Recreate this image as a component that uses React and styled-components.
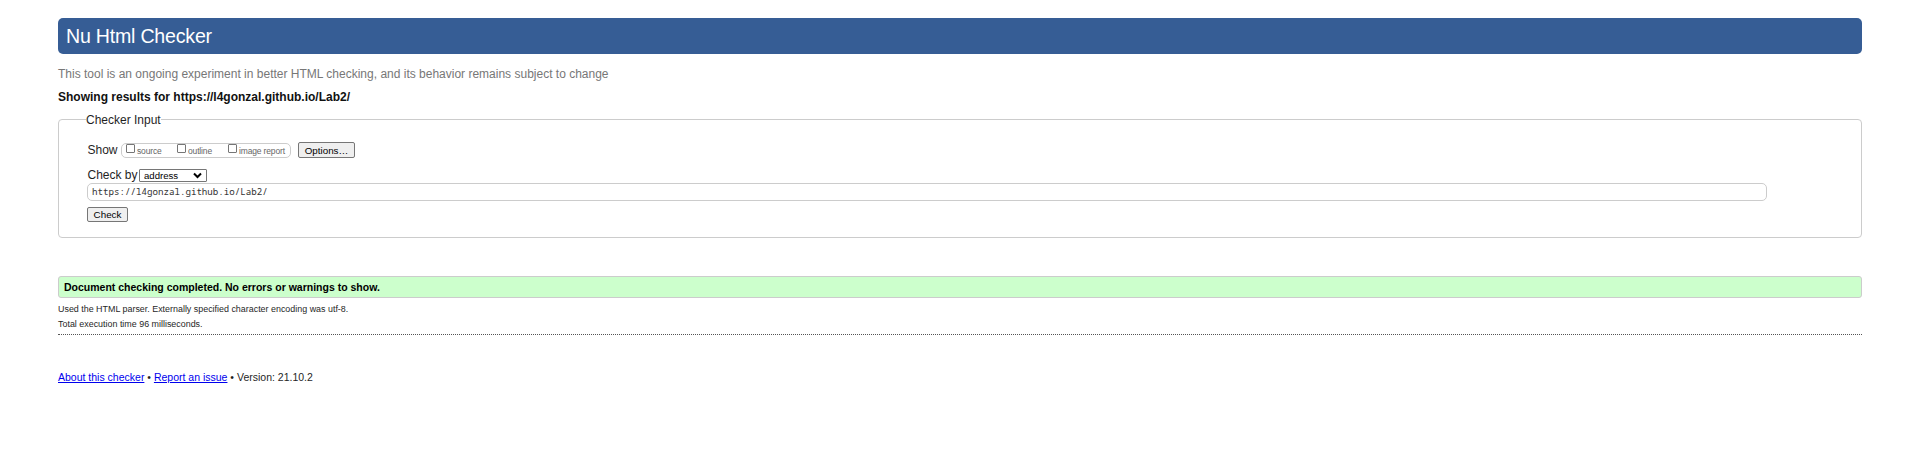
import React from "react";
import styled, { createGlobalStyle } from "styled-components";

const GlobalStyle = createGlobalStyle`
  * { box-sizing: border-box; }
  body {
    margin: 0;
    background: #fff;
    color: #1f1f1f;
    font-family: Arial, "Liberation Sans", sans-serif;
  }
`;

const Page = styled.div`
  padding: 18px 58px 0;
`;

const Banner = styled.header`
  height: 36px;
  padding-left: 8px;
  border-radius: 5px;
  background: #365d95;
`;

const Title = styled.h1`
  margin: 0;
  font-size: 19.6px;
  font-weight: 400;
  line-height: 36px;
  letter-spacing: -0.22px;
  color: #fff;
`;

const Notice = styled.p`
  margin: 9px 0 0;
  font-size: 12px;
  line-height: 22px;
  color: #777;
`;

const ResultsHeading = styled.h2`
  margin: 1px 0 0;
  font-size: 12px;
  line-height: 22px;
  color: #111;
`;

const InputPanel = styled.fieldset`
  height: 126px;
  margin: 4px 0 0;
  padding: 15px 27px 0 28px;
  border: 1px solid #ccc;
  border-radius: 4px;
`;

const Legend = styled.legend`
  height: 15px;
  margin-left: -1px;
  padding: 0;
  font-size: 12px;
  line-height: 16px;
`;

const ShowRow = styled.div`
  display: flex;
  align-items: flex-start;
  height: 27px;
`;

const FieldLabel = styled.span`
  width: ${(p) => p.$width}px;
  padding-left: 0.5px;
  font-size: 12px;
  line-height: ${(p) => p.$line}px;
  white-space: nowrap;
`;

const Choices = styled.div`
  display: flex;
  width: 170px;
  height: 15px;
  margin: 1px 7px 0 0;
  padding-left: 4px;
  border: 1px solid #ccc;
  border-radius: 5px;
`;

const Choice = styled.label`
  display: flex;
  align-items: flex-start;
  flex: none;
  gap: 2px;
  width: 51px;
  font-size: 8.5px;
  line-height: 14px;
  letter-spacing: -0.15px;
  color: #666;
  white-space: nowrap;
`;

const Checkbox = styled.input`
  appearance: none;
  flex: none;
  width: 9px;
  height: 9px;
  margin: 0;
  border: 1px solid #767676;
  border-radius: 1px;
  background: #fff;
`;

const Button = styled.button`
  display: block;
  width: ${(p) => p.$width}px;
  height: ${(p) => p.$height}px;
  padding: 0;
  border: 1px solid #767676;
  border-radius: 2px;
  background: #efefef;
  font-family: inherit;
  font-size: 9.8px;
  line-height: ${(p) => p.$line}px;
  color: #000;
`;

const MethodRow = styled.div`
  display: flex;
  height: 14px;
`;

const SelectWrap = styled.div`
  position: relative;
  width: 68px;
  height: 13px;
`;

const Select = styled.select`
  appearance: none;
  display: block;
  width: 100%;
  height: 100%;
  padding: 0 0 0 4px;
  border: 1px solid #767676;
  border-radius: 1px;
  background: #fff;
  font-family: inherit;
  font-size: 9.6px;
  line-height: 11px;
  color: #000;
`;

const Chevron = styled.svg`
  position: absolute;
  top: 3px;
  right: 5px;
  pointer-events: none;
`;

const AddressInput = styled.input`
  display: block;
  width: 1680px;
  height: 18px;
  margin-bottom: 6px;
  padding: 0 4px 1px;
  border: 1px solid #ccc;
  border-radius: 5px;
  font-family: Consolas, "Noto Sans Mono", "DejaVu Sans Mono", monospace;
  font-size: 9.16px;
  color: #333;
  outline: none;
`;

const Success = styled.p`
  height: 22px;
  margin: 38px 0 0;
  padding-left: 5px;
  border: 1px solid #ccc;
  border-radius: 3px;
  background: #cfc;
  font-size: 10.5px;
  font-weight: 700;
  line-height: 21px;
  color: #000;
`;

const Details = styled.div`
  height: 37px;
  padding-top: 4px;
  border-bottom: 1px dotted #555;
`;

const Detail = styled.p`
  margin: 0;
  font-size: 8.92px;
  line-height: 15px;
`;

const Footer = styled.footer`
  margin-top: 34px;
  font-size: 10.5px;
  line-height: 16px;
`;

const Link = styled.a`
  color: #0000ee;
  text-decoration: underline;
`;

export default function App() {
  return (
    <>
      <GlobalStyle />
      <Page>
        <Banner>
          <Title>Nu Html Checker</Title>
        </Banner>
        <Notice>
          This tool is an ongoing experiment in better HTML checking, and its
          behavior remains subject to change
        </Notice>
        <ResultsHeading>
          Showing results for https://l4gonzal.github.io/Lab2/
        </ResultsHeading>
        <InputPanel>
          <Legend>Checker Input</Legend>
          <ShowRow>
            <FieldLabel $width={34} $line={16}>Show</FieldLabel>
            <Choices>
              {["source", "outline", "image report"].map((name) => (
                <Choice key={name}>
                  <Checkbox type="checkbox" />
                  {name}
                </Choice>
              ))}
            </Choices>
            <Button $width={57} $height={16} $line={13}>Options…</Button>
          </ShowRow>
          <MethodRow>
            <FieldLabel $width={52} $line={13}>Check by</FieldLabel>
            <SelectWrap>
              <Select defaultValue="address">
                <option value="address">address</option>
              </Select>
              <Chevron width="9" height="7" viewBox="0 0 9 7">
                <path d="M1 1.5 4.5 5 8 1.5" fill="none" stroke="#000" strokeWidth="2" />
              </Chevron>
            </SelectWrap>
          </MethodRow>
          <AddressInput
            type="url"
            readOnly
            spellCheck={false}
            value="https://l4gonzal.github.io/Lab2/"
          />
          <Button $width={41} $height={15} $line={13}>Check</Button>
        </InputPanel>
        <Success>
          Document checking completed. No errors or warnings to show.
        </Success>
        <Details>
          <Detail>
            Used the HTML parser. Externally specified character encoding was
            utf-8.
          </Detail>
          <Detail>Total execution time 96 milliseconds.</Detail>
        </Details>
        <Footer>
          <Link href="#about">About this checker</Link> •{" "}
          <Link href="#issues">Report an issue</Link> • Version: 21.10.2
        </Footer>
      </Page>
    </>
  );
}
